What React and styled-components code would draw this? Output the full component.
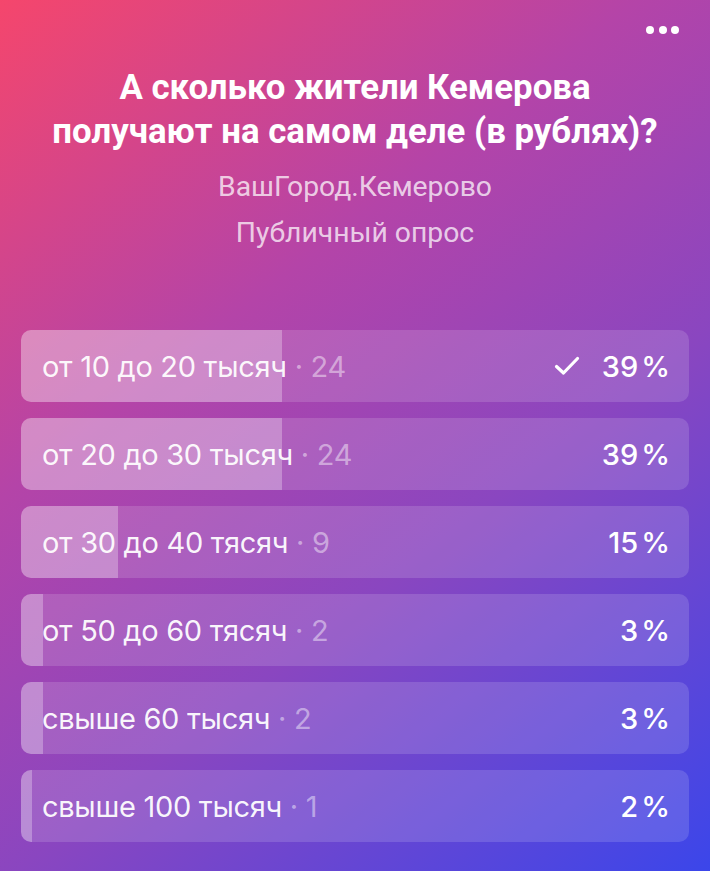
import React from "react";
import styled, { createGlobalStyle } from "styled-components";

const Global = createGlobalStyle`
  html, body { margin: 0; padding: 0; }
  body { background: #7a45c0; }
`;

const Page = styled.div`
  width: 710px;
  height: 871px;
  box-sizing: border-box;
  overflow: hidden;
  background: linear-gradient(142deg, #f5466c 0%, #b444a8 35%, #8a46c0 62%, #3b46ea 100%);
  display: flex;
  flex-direction: column;
  padding: 0 20px;
  color: #fff;
`;

const TopBar = styled.div`
  height: 65px;
  box-sizing: border-box;
  display: flex;
  justify-content: flex-end;
  align-items: flex-start;
  padding: 26px 11px 0 0;
`;

const Dots = styled.div`
  display: flex;
  gap: 4.5px;
`;

const Dot = styled.span`
  width: 8px;
  height: 8px;
  border-radius: 50%;
  background: #fff;
`;

const Title = styled.h1`
  margin: 0;
  font-family: Roboto, "Liberation Sans", sans-serif;
  font-weight: 700;
  font-size: 34.8px;
  line-height: 44px;
  text-align: center;
`;

const Sub = styled.div`
  margin-top: 11px;
  font-family: Roboto, "Liberation Sans", sans-serif;
  font-size: 28.3px;
  line-height: 46px;
  text-align: center;
  color: rgba(255, 255, 255, 0.74);
`;

const List = styled.div`
  margin-top: 74px;
  display: flex;
  flex-direction: column;
  gap: 16px;
  padding: 0 1px;
`;

const Row = styled.div`
  position: relative;
  height: 72px;
  border-radius: 10px;
  background: rgba(255, 255, 255, 0.14);
  overflow: hidden;
  display: flex;
  align-items: center;
  padding: 0 19px 0 21px;
  font-family: Inter, "Noto Sans", sans-serif;
  font-size: 29px;
`;

const Fill = styled.div`
  position: absolute;
  left: 0;
  top: 0;
  bottom: 0;
  background: rgba(255, 255, 255, 0.28);
`;

const Label = styled.span`
  position: relative;
  flex: 1;
  letter-spacing: -0.3px;
  color: rgba(255, 255, 255, 0.95);
`;

const Count = styled.span`
  color: rgba(255, 255, 255, 0.45);
`;

const Right = styled.span`
  position: relative;
  display: flex;
  align-items: center;
  gap: 22px;
  font-weight: 500;
`;

const Pct = styled.span`
  margin-left: 3px;
`;

const Check = () => (
  <svg width="26" height="20" viewBox="0 0 26 20" fill="none">
    <path d="M2.5 10.5 L9.5 17 L23.5 2.5" stroke="#fff" strokeWidth="3.2" strokeLinecap="round" strokeLinejoin="round" />
  </svg>
);

const options = [
  { label: "от 10 до 20 тысяч", count: 24, pct: 39, checked: true },
  { label: "от 20 до 30 тысяч", count: 24, pct: 39 },
  { label: "от 30 до 40 тясяч", count: 9, pct: 14.5, shown: 15 },
  { label: "от 50 до 60 тясяч", count: 2, pct: 3.3, shown: 3 },
  { label: "свыше 60 тысяч", count: 2, pct: 3.3, shown: 3 },
  { label: "свыше 100 тысяч", count: 1, pct: 1.6, shown: 2 },
];

export default function App() {
  return (
    <Page>
      <Global />
      <TopBar>
        <Dots>
          <Dot />
          <Dot />
          <Dot />
        </Dots>
      </TopBar>
      <Title>
        А сколько жители Кемерова
        <br />
        получают на самом деле (в рублях)?
      </Title>
      <Sub>
        ВашГород.Кемерово
        <br />
        Публичный опрос
      </Sub>
      <List>
        {options.map((o) => (
          <Row key={o.label}>
            <Fill style={{ width: `${o.pct}%` }} />
            <Label>
              {o.label} <Count>· {o.count}</Count>
            </Label>
            <Right>
              {o.checked && <Check />}
              <span>
                {o.shown ?? o.pct}
                <Pct>%</Pct>
              </span>
            </Right>
          </Row>
        ))}
      </List>
    </Page>
  );
}
